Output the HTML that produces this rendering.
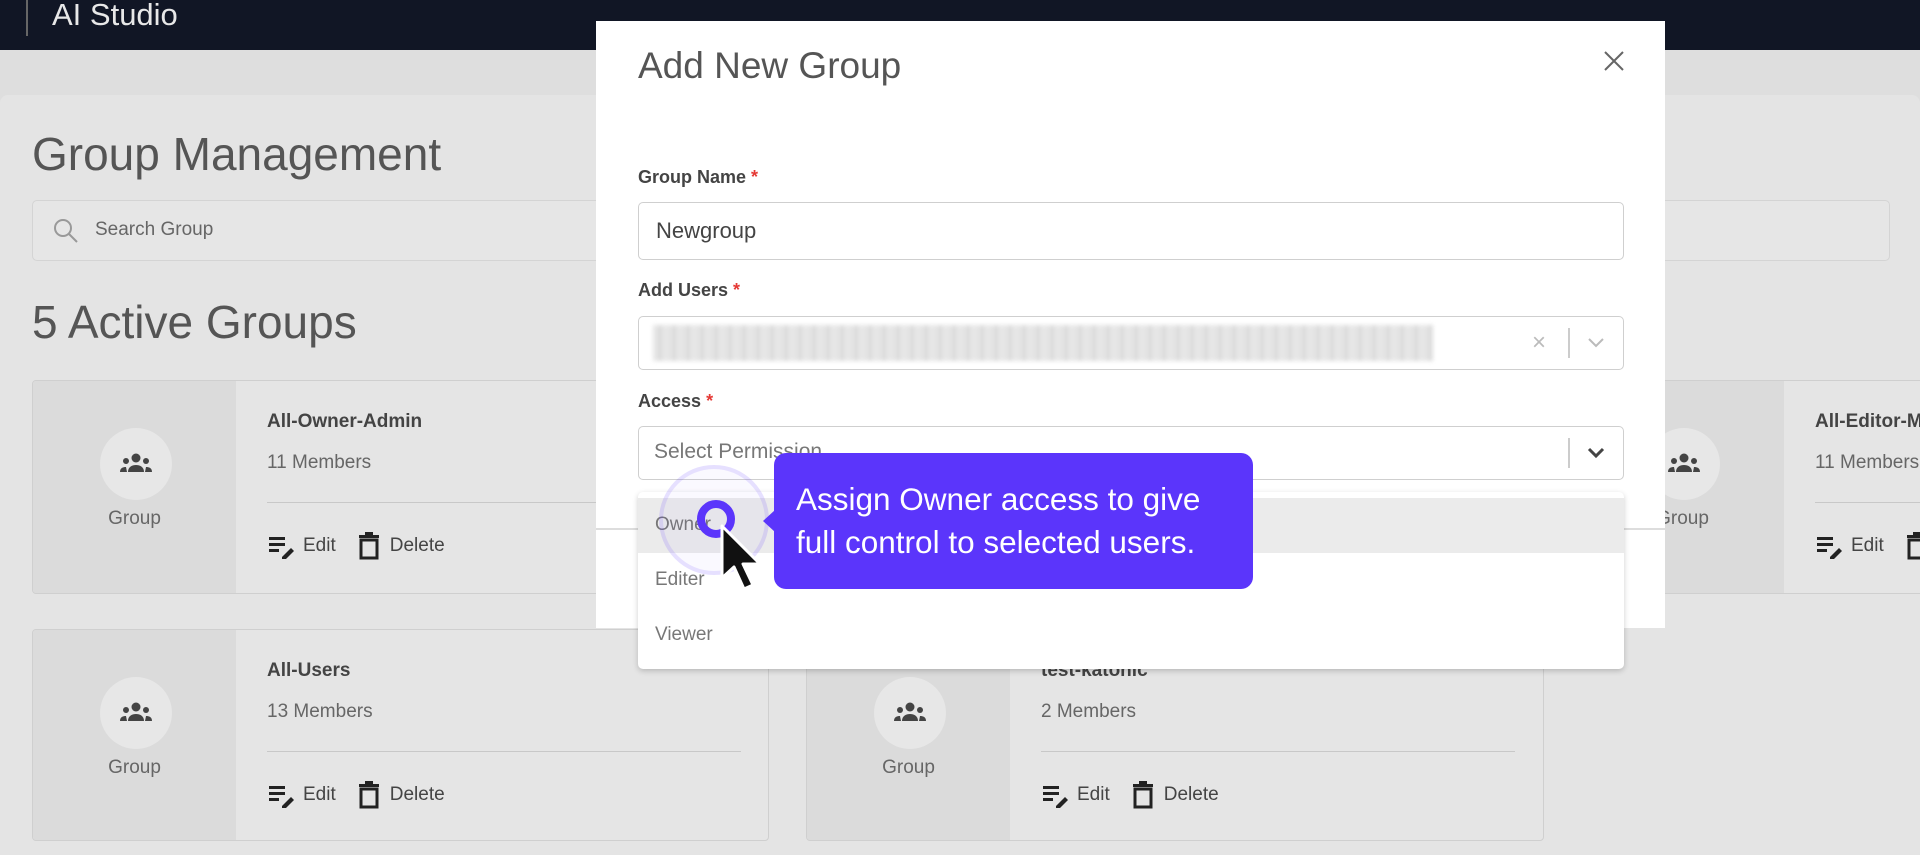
<!DOCTYPE html>
<html><head><meta charset="utf-8"><style>
*{box-sizing:border-box;margin:0;padding:0}
body{width:1920px;height:854px;overflow:hidden;background:#dedede;font-family:"Liberation Sans",sans-serif;position:relative}
.abs{position:absolute}
.hdr{left:0;top:0;width:1920px;height:50px;background:#111625}
.panel{left:0;top:95px;width:1920px;height:760px;background:#e4e4e4;border-radius:8px 8px 0 0}
.card{background:#e5e5e5;border:1px solid #cfcfcf;border-radius:4px;overflow:hidden}
.card .l{position:absolute;left:0;top:0;width:203px;height:100%;background:#dbdbdb}
.circ{position:absolute;left:67px;top:47px;width:72px;height:72px;border-radius:50%;background:#e7e7e7}
.glbl{position:absolute;left:0;width:203px;text-align:center;top:127px;font-size:19px;color:#666}
.ttl{position:absolute;left:234px;top:30px;font-size:19px;font-weight:bold;color:#444;white-space:nowrap}
.mem{position:absolute;left:234px;top:71px;font-size:19px;color:#666;white-space:nowrap}
.sep{position:absolute;left:234px;width:474px;top:121px;border-top:1.5px solid #c8c8c8}
.act{position:absolute;left:234px;top:150px;font-size:19px;color:#444;display:flex;align-items:center;gap:6px}
.lab{font-size:18px;font-weight:bold;color:#444}
.lab b{color:#e53935}
.inp{border:1.5px solid #cfcfcf;border-radius:5px;background:#fff}
</style></head><body>
<div class="abs hdr"></div>
<div class="abs" style="left:26px;top:0;width:2px;height:36px;background:#666"></div>
<div class="abs" style="left:52px;top:-3px;font-size:31px;color:#e8e8e8">AI Studio</div>
<div class="abs panel"></div>
<div class="abs" style="left:32px;top:127px;font-size:46px;color:#555">Group Management</div>
<div class="abs" style="left:32px;top:200px;width:1858px;height:61px;border:1.5px solid #d4d4d4;border-radius:5px;background:#e6e6e6"></div>
<svg class="abs" style="left:52px;top:217px" width="30" height="30" viewBox="0 0 30 30"><circle cx="11" cy="11" r="8" fill="none" stroke="#999" stroke-width="2"/><line x1="17" y1="17" x2="25" y2="25" stroke="#999" stroke-width="2"/></svg>
<div class="abs" style="left:95px;top:219px;font-size:19px;color:#666">Search Group</div>
<div class="abs" style="left:32px;top:295px;font-size:46px;color:#555">5 Active Groups</div>

<div class="abs card" style="left:32px;top:380px;width:737px;height:214px"><div class="l"></div><div class="circ"></div>
<svg class="abs" style="left:85px;top:70px" width="36" height="26" viewBox="0 0 36 26"><circle cx="18" cy="7" r="4.5" fill="#444"/><path d="M10 21c0-5 4-7 8-7s8 2 8 7z" fill="#444"/><circle cx="8" cy="10" r="3" fill="#444"/><path d="M2 21c0-4 3-5 6-5l1 5z" fill="#444"/><circle cx="28" cy="10" r="3" fill="#444"/><path d="M34 21c0-4-3-5-6-5l-1 5z" fill="#444"/></svg>
<div class="glbl">Group</div><div class="ttl">All-Owner-Admin</div><div class="mem">11 Members</div><div class="sep"></div>
<div class="act"><svg width="30" height="26" viewBox="0 0 30 26"><rect x="2" y="4" width="16" height="3" fill="#222"/><rect x="2" y="10" width="16" height="3" fill="#222"/><rect x="2" y="16" width="10" height="3" fill="#222"/><path d="M15 24l9-9 3 3-9 9h-3z" fill="#222"/></svg>Edit<svg width="30" height="30" viewBox="0 0 30 30" style="margin-left:12px"><path d="M7 9h16v18H7z" fill="none" stroke="#222" stroke-width="3"/><rect x="5" y="4" width="20" height="3" fill="#222"/><rect x="11" y="1" width="8" height="3" fill="#222"/></svg>Delete</div></div>

<div class="abs card" style="left:32px;top:629px;width:737px;height:212px"><div class="l"></div><div class="circ"></div>
<svg class="abs" style="left:85px;top:70px" width="36" height="26" viewBox="0 0 36 26"><circle cx="18" cy="7" r="4.5" fill="#444"/><path d="M10 21c0-5 4-7 8-7s8 2 8 7z" fill="#444"/><circle cx="8" cy="10" r="3" fill="#444"/><path d="M2 21c0-4 3-5 6-5l1 5z" fill="#444"/><circle cx="28" cy="10" r="3" fill="#444"/><path d="M34 21c0-4-3-5-6-5l-1 5z" fill="#444"/></svg>
<div class="glbl">Group</div><div class="ttl">All-Users</div><div class="mem">13 Members</div><div class="sep"></div>
<div class="act"><svg width="30" height="26" viewBox="0 0 30 26"><rect x="2" y="4" width="16" height="3" fill="#222"/><rect x="2" y="10" width="16" height="3" fill="#222"/><rect x="2" y="16" width="10" height="3" fill="#222"/><path d="M15 24l9-9 3 3-9 9h-3z" fill="#222"/></svg>Edit<svg width="30" height="30" viewBox="0 0 30 30" style="margin-left:12px"><path d="M7 9h16v18H7z" fill="none" stroke="#222" stroke-width="3"/><rect x="5" y="4" width="20" height="3" fill="#222"/><rect x="11" y="1" width="8" height="3" fill="#222"/></svg>Delete</div></div>

<div class="abs card" style="left:806px;top:629px;width:738px;height:212px"><div class="l"></div><div class="circ"></div>
<svg class="abs" style="left:85px;top:70px" width="36" height="26" viewBox="0 0 36 26"><circle cx="18" cy="7" r="4.5" fill="#444"/><path d="M10 21c0-5 4-7 8-7s8 2 8 7z" fill="#444"/><circle cx="8" cy="10" r="3" fill="#444"/><path d="M2 21c0-4 3-5 6-5l1 5z" fill="#444"/><circle cx="28" cy="10" r="3" fill="#444"/><path d="M34 21c0-4-3-5-6-5l-1 5z" fill="#444"/></svg>
<div class="glbl">Group</div><div class="ttl">test-katonic</div><div class="mem">2 Members</div><div class="sep"></div>
<div class="act"><svg width="30" height="26" viewBox="0 0 30 26"><rect x="2" y="4" width="16" height="3" fill="#222"/><rect x="2" y="10" width="16" height="3" fill="#222"/><rect x="2" y="16" width="10" height="3" fill="#222"/><path d="M15 24l9-9 3 3-9 9h-3z" fill="#222"/></svg>Edit<svg width="30" height="30" viewBox="0 0 30 30" style="margin-left:12px"><path d="M7 9h16v18H7z" fill="none" stroke="#222" stroke-width="3"/><rect x="5" y="4" width="20" height="3" fill="#222"/><rect x="11" y="1" width="8" height="3" fill="#222"/></svg>Delete</div></div>

<div class="abs card" style="left:1580px;top:380px;width:360px;height:214px"><div class="l"></div><div class="circ"></div>
<svg class="abs" style="left:85px;top:70px" width="36" height="26" viewBox="0 0 36 26"><circle cx="18" cy="7" r="4.5" fill="#444"/><path d="M10 21c0-5 4-7 8-7s8 2 8 7z" fill="#444"/><circle cx="8" cy="10" r="3" fill="#444"/><path d="M2 21c0-4 3-5 6-5l1 5z" fill="#444"/><circle cx="28" cy="10" r="3" fill="#444"/><path d="M34 21c0-4-3-5-6-5l-1 5z" fill="#444"/></svg>
<div class="glbl">Group</div><div class="ttl">All-Editor-Members</div><div class="mem">11 Members</div><div class="sep"></div>
<div class="act"><svg width="30" height="26" viewBox="0 0 30 26"><rect x="2" y="4" width="16" height="3" fill="#222"/><rect x="2" y="10" width="16" height="3" fill="#222"/><rect x="2" y="16" width="10" height="3" fill="#222"/><path d="M15 24l9-9 3 3-9 9h-3z" fill="#222"/></svg>Edit<svg width="30" height="30" viewBox="0 0 30 30" style="margin-left:12px"><path d="M7 9h16v18H7z" fill="none" stroke="#222" stroke-width="3"/><rect x="5" y="4" width="20" height="3" fill="#222"/><rect x="11" y="1" width="8" height="3" fill="#222"/></svg>Delete</div></div>

<div class="abs" style="left:596px;top:21px;width:1069px;height:607px;background:#fff"></div>
<div class="abs" style="left:638px;top:45px;font-size:37px;color:#555">Add New Group</div>
<svg class="abs" style="left:1603px;top:50px" width="22" height="22" viewBox="0 0 22 22"><path d="M2 2L20 20M20 2L2 20" stroke="#666" stroke-width="2"/></svg>
<div class="abs lab" style="left:638px;top:167px">Group Name <b>*</b></div>
<div class="abs inp" style="left:638px;top:202px;width:986px;height:58px"></div>
<div class="abs" style="left:656px;top:218px;font-size:22px;color:#444">Newgroup</div>
<div class="abs lab" style="left:638px;top:280px">Add Users <b>*</b></div>
<div class="abs inp" style="left:638px;top:316px;width:986px;height:54px"></div>
<div class="abs" style="left:653px;top:325px;width:780px;height:36px;background:repeating-linear-gradient(90deg,#e2e2e2 0 6px,#d2d2d2 6px 9px,#e6e6e6 9px 14px);filter:blur(2px);opacity:.9"></div>
<div class="abs" style="left:1532px;top:329px;font-size:24px;color:#bbb">×</div>
<div class="abs" style="left:1568px;top:328px;width:1.5px;height:30px;background:#ccc"></div>
<svg class="abs" style="left:1586px;top:336px" width="20" height="14" viewBox="0 0 20 14"><path d="M3 3l7 7 7-7" fill="none" stroke="#bbb" stroke-width="2"/></svg>
<div class="abs lab" style="left:638px;top:391px">Access <b>*</b></div>
<div class="abs inp" style="left:638px;top:426px;width:986px;height:54px"></div>
<div class="abs" style="left:654px;top:440px;font-size:21px;color:#777">Select Permission</div>
<div class="abs" style="left:1568px;top:438px;width:1.5px;height:30px;background:#ccc"></div>
<svg class="abs" style="left:1586px;top:446px" width="20" height="14" viewBox="0 0 20 14"><path d="M3 3l7 7 7-7" fill="none" stroke="#444" stroke-width="3"/></svg>
<div class="abs" style="left:596px;top:528px;width:1069px;height:1.5px;background:#ddd"></div>
<div class="abs" style="left:638px;top:492px;width:986px;height:177px;background:#fff;border-radius:5px;box-shadow:0 2px 6px rgba(0,0,0,.2)"></div>
<div class="abs" style="left:638px;top:498px;width:986px;height:55px;background:#ebebeb"></div>
<div class="abs" style="left:655px;top:514px;font-size:19px;color:#777">Owner</div>
<div class="abs" style="left:655px;top:569px;font-size:19px;color:#777">Editer</div>
<div class="abs" style="left:655px;top:624px;font-size:19px;color:#777">Viewer</div>
<div class="abs" style="left:659px;top:465px;width:110px;height:110px;border-radius:50%;border:4px solid rgba(91,53,251,.12);background:rgba(91,53,251,.03)"></div>
<div class="abs" style="left:697px;top:500px;width:38px;height:38px;border-radius:50%;border:8px solid #5b35fb"></div>
<svg class="abs" style="left:718px;top:523px" width="50" height="80" viewBox="0 0 50 80"><path d="M4 3v52l12-11 10 22 9-4-10-21h17z" fill="#111" stroke="#fff" stroke-width="3" stroke-linejoin="round"/></svg>
<div class="abs" style="left:774px;top:453px;width:479px;height:136px;background:#5b35fb;border-radius:12px"></div>
<div class="abs" style="left:763px;top:510px;width:0;height:0;border-top:11px solid transparent;border-bottom:11px solid transparent;border-right:12px solid #5b35fb"></div>
<div class="abs" style="left:796px;top:478px;font-size:31.5px;line-height:43px;color:#fff;white-space:nowrap">Assign Owner access to give<br>full control to selected users.</div>
</body></html>
